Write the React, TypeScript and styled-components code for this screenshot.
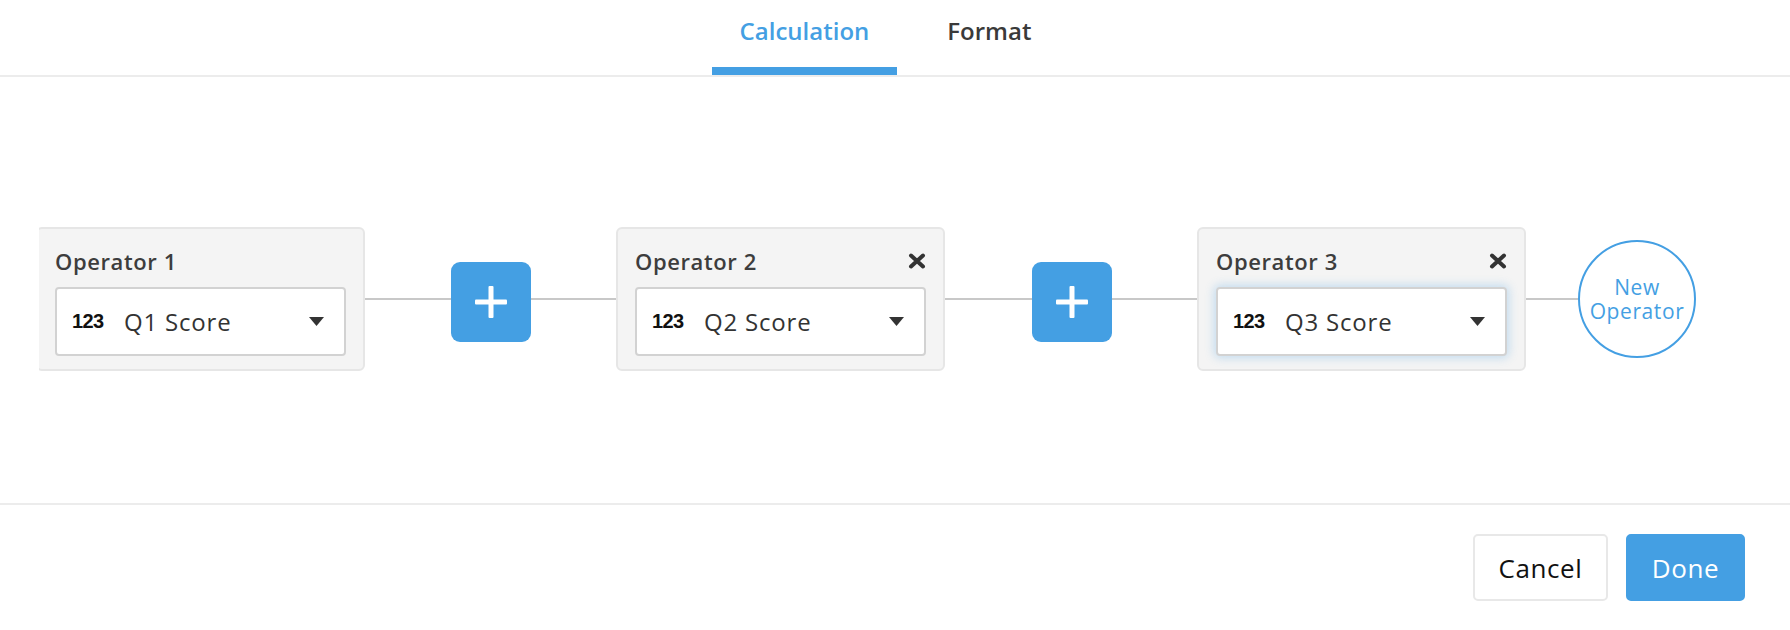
import { FC } from 'react'
import styled, { createGlobalStyle } from 'styled-components'

const GlobalStyle = createGlobalStyle`
html, body {
  margin: 0;
  padding: 0;
  background: #ffffff;
}
body {
  font-family: "Open Sans", "Liberation Sans", sans-serif;
  color: #333333;
}
`;

const BLUE = '#449fe3';

const Page = styled.div`
width: 1790px;
height: 630px;
display: flex;
flex-direction: column;
overflow: hidden;
`;

const TabBar = styled.div`
height: 75px;
border-bottom: 2px solid #ececec;
display: flex;
justify-content: center;
gap: 22px;
padding-right: 19px;
box-sizing: content-box;
`;

const Tab = styled.div<{ $active?: boolean }>`
display: flex;
align-items: flex-start;
justify-content: center;
padding: 14px 28px 0;
font-size: 24px;
font-weight: 600;
color: ${p => (p.$active ? BLUE : '#3a3a3a')};
border-bottom: 8px solid ${p => (p.$active ? BLUE : 'transparent')};
box-sizing: border-box;
height: 75px;
`;

const Body = styled.div`
height: 426px;
padding-top: 150px;
box-sizing: border-box;
`;

const Viewport = styled.div`
margin-left: 39px;
overflow: hidden;
`;

const Track = styled.div`
display: flex;
align-items: center;
margin-left: -3px;
`;

const Card = styled.div`
width: 329px;
height: 144px;
box-sizing: border-box;
background: #f4f4f4;
border: 2px solid #e6e6e6;
border-radius: 6px;
padding: 17px 17px 0;
flex-shrink: 0;
`;

const CardHead = styled.div`
display: flex;
align-items: center;
justify-content: space-between;
height: 30px;
margin-bottom: 11px;
`;

const CardTitle = styled.span`
font-size: 22px;
font-weight: 600;
color: #3d3d3d;
letter-spacing: 0.6px;
`;

const Close = styled.svg`
width: 18px;
height: 16px;
display: block;
`;

const Select = styled.div<{ $focused?: boolean }>`
height: 69px;
box-sizing: border-box;
background: #ffffff;
border: 2px solid #d2d2d2;
border-radius: 4px;
display: flex;
align-items: center;
padding: 0 20px 0 15px;
box-shadow: ${p => (p.$focused ? '0 0 10px 2px rgba(68, 159, 227, 0.28)' : 'none')};
`;

const TypeTag = styled.span`
font-family: "Liberation Sans Narrow", "Liberation Sans", sans-serif;
font-size: 20px;
font-weight: 600;
color: #111111;
letter-spacing: -0.6px;
width: 52px;
`;

const Value = styled.span`
flex: 1;
font-size: 24px;
letter-spacing: 0.8px;
color: #333333;
`;

const Caret = styled.svg`
width: 15px;
height: 9px;
display: block;
`;

const Line = styled.div<{ $w: number }>`
width: ${p => p.$w}px;
height: 2px;
background: #c8c8c8;
flex-shrink: 0;
`;

const PlusButton = styled.button`
width: 80px;
height: 80px;
margin-top: 6px;
border: none;
border-radius: 9px;
background: ${BLUE};
display: flex;
align-items: center;
justify-content: center;
padding: 0;
flex-shrink: 0;
cursor: pointer;
`;

const NewOperator = styled.div`
width: 114px;
height: 114px;
border: 2px solid ${BLUE};
border-radius: 50%;
display: flex;
flex-direction: column;
align-items: center;
justify-content: center;
text-align: center;
color: ${BLUE};
font-size: 21px;
letter-spacing: 0.6px;
flex-shrink: 0;
background: #ffffff;
`;

const NewLine = styled.span`
display: block;
line-height: 24px;
height: 24px;
`;

const Footer = styled.div`
border-top: 2px solid #ececec;
display: flex;
justify-content: flex-end;
gap: 18px;
padding: 29px 45px 0;
`;

const Button = styled.button<{ $primary?: boolean }>`
height: 67px;
width: ${p => (p.$primary ? 119 : 135)}px;
box-sizing: border-box;
border-radius: 5px;
border: 2px solid ${p => (p.$primary ? BLUE : '#e8e8e8')};
background: ${p => (p.$primary ? BLUE : '#ffffff')};
color: ${p => (p.$primary ? '#ffffff' : '#111111')};
font-family: "Open Sans", "Liberation Sans", sans-serif;
font-size: 26px;
letter-spacing: 0.6px;
padding: 0;
cursor: pointer;
`;

const CloseIcon: FC = () => (
  <Close viewBox="0 0 18 16">
    <path d="M3 2.5 L15 13.5 M15 2.5 L3 13.5" stroke="#333" strokeWidth="4" strokeLinecap="round" />
  </Close>
)

const PlusIcon: FC = () => (
  <svg width="34" height="34" viewBox="0 0 34 34">
    <rect x="14.5" y="1" width="5" height="32" rx="1" fill="#fff" />
    <rect x="1" y="14.5" width="32" height="5" rx="1" fill="#fff" />
  </svg>
)

const OperatorCard: FC<{ index: number; removable?: boolean; focused?: boolean }> = ({ index, removable, focused }) => (
  <Card>
    <CardHead>
      <CardTitle>Operator {index}</CardTitle>
      {removable && <CloseIcon />}
    </CardHead>
    <Select $focused={focused}>
      <TypeTag>123</TypeTag>
      <Value>Q{index} Score</Value>
      <Caret viewBox="0 0 15 9">
        <path d="M0 0 L15 0 L7.5 9 Z" fill="#333" />
      </Caret>
    </Select>
  </Card>
)

const App: FC = () => (
  <Page>
    <GlobalStyle />
    <TabBar>
      <Tab $active>Calculation</Tab>
      <Tab>Format</Tab>
    </TabBar>
    <Body>
      <Viewport>
        <Track>
          <OperatorCard index={1} />
          <Line $w={86} />
          <PlusButton><PlusIcon /></PlusButton>
          <Line $w={85} />
          <OperatorCard index={2} removable />
          <Line $w={87} />
          <PlusButton><PlusIcon /></PlusButton>
          <Line $w={85} />
          <OperatorCard index={3} removable focused />
          <Line $w={52} />
          <NewOperator>
            <NewLine>New</NewLine>
            <NewLine>Operator</NewLine>
          </NewOperator>
        </Track>
      </Viewport>
    </Body>
    <Footer>
      <Button>Cancel</Button>
      <Button $primary>Done</Button>
    </Footer>
  </Page>
)

export default App
